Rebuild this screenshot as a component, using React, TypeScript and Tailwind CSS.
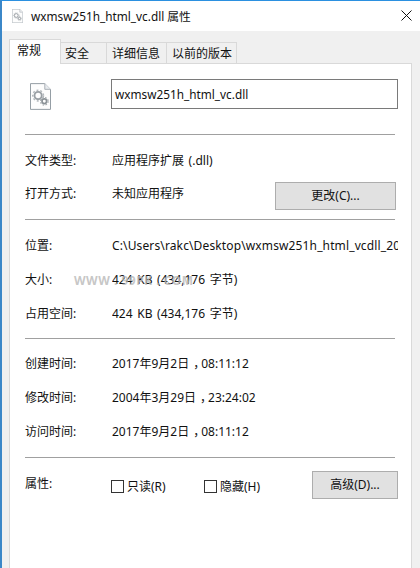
import type { ReactNode } from 'react';

const font = { fontFamily: '"Noto Sans", "Noto Sans CJK SC", sans-serif' };

function GearFile({ width, height }: { width: number; height: number }) {
  return (
    <svg width={width} height={height} viewBox="0 0 22 28" fill="none">
      <path d="M.5.5H15.5L21.5 6.5V27.5H.5Z" fill="#fdfdfd" stroke="#8f98a0" />
      <path d="M15.5.5V6.5H21.5" fill="#e8ebee" stroke="#a8aeb4" />
      <circle cx="8.5" cy="13" r="3.8" stroke="#9aa0a5" strokeWidth="2" />
      <circle cx="8.5" cy="13" r="5.6" stroke="#b4b9bd" strokeWidth="1.6" strokeDasharray="2 2" />
      <circle cx="15" cy="19" r="2.4" stroke="#8b9297" strokeWidth="1.8" />
      <circle cx="15" cy="19" r="4" stroke="#a4aaae" strokeWidth="1.3" strokeDasharray="1.6 1.6" />
    </svg>
  );
}

function Row({ label, value, path, watermark }: { label: string; value: ReactNode; path?: boolean; watermark?: boolean }) {
  return (
    <div className="relative flex h-[34px] items-center whitespace-nowrap pt-[2px]">
      <div className="w-[87px] shrink-0">{label}</div>
      <div className={`w-[286px] overflow-hidden [word-spacing:1.5px] ${path ? 'tracking-[0.13px]' : ''}`}>{value}</div>
      {watermark && (
        <div className="absolute left-[49px] top-[10px] text-[12px] font-bold leading-[18px] tracking-[0.5px] text-[#b8b8b8]/80">
          WWW . 99PK . COM
        </div>
      )}
    </div>
  );
}

function Comma() {
  return <span className="inline-block w-[12px] overflow-hidden pl-[4px] align-bottom">，</span>;
}

function Divider() {
  return <div className="h-px w-[370px] bg-[#a0a0a0]" />;
}

function Tab({ label, width, active }: { label: string; width: string; active?: boolean }) {
  if (active) {
    return (
      <div className={`${width} relative z-10 -mr-px h-[25px] border border-b-0 border-[#d9d9d9] bg-white pl-[7px] pt-[2px]`}>
        {label}
      </div>
    );
  }
  return (
    <div className={`${width} h-[22px] border-r border-t border-[#d9d9d9] bg-[#f0f0f0] pl-[5px] pt-[2px]`}>
      {label}
    </div>
  );
}

export default function App() {
  return (
    <div
      style={font}
      className="flex h-[568px] w-[420px] flex-col overflow-hidden border-l-2 border-t border-l-[#3b87c8] border-t-[#2b90e0] bg-[#f0f0f0] text-[12px] leading-[18px] text-[#111]"
    >
      <div className="flex h-[30px] shrink-0 items-center bg-white pl-[10px]">
        <GearFile width={11} height={14} />
        <span className="ml-[8px] text-[11.8px]">wxmsw251h_html_vc.dll 属性</span>
        <svg className="mb-[2px] ml-auto mr-[8px]" width="11" height="11" viewBox="0 0 11 11" stroke="#111" strokeWidth="1">
          <path d="M.5.5L10.5 10.5M10.5.5L.5 10.5" />
        </svg>
      </div>
      <div className="flex h-[33px] shrink-0 items-end pl-[7px]">
        <Tab label="常规" width="w-[52px]" active />
        <Tab label="安全" width="w-[47px]" />
        <Tab label="详细信息" width="w-[60px]" />
        <Tab label="以前的版本" width="w-[70px]" />
      </div>
      <div className="-mt-px ml-[7px] w-[403px] flex-1 border-x border-t border-[#d9d9d9] bg-white pl-[15px]">
        <div className="flex h-[70px] items-center">
          <div className="mb-[5px] w-[86px] shrink-0 pl-[5px]">
            <GearFile width={21} height={27} />
          </div>
          <div className="mt-[-10px] flex h-[30px] w-[287px] items-center border border-[#7a7a7a] pl-[3px] text-[11.8px]">
            wxmsw251h_html_vc.dll
          </div>
        </div>
        <Divider />
        <div className="h-[8px]" />
        <Row label="文件类型:" value="应用程序扩展 (.dll)" />
        <div className="flex h-[34px] items-center whitespace-nowrap">
          <div className="w-[87px] shrink-0">打开方式:</div>
          <div className="w-[163px] shrink-0">未知应用程序</div>
          <button className="mt-[4px] h-[28px] w-[121px] shrink-0 border border-[#adadad] bg-[#e1e1e1]">更改(C)...</button>
        </div>
        <div className="h-[8px]" />
        <Divider />
        <div className="h-[8px]" />
        <Row label="位置:" value="C:\Users\rakc\Desktop\wxmsw251h_html_vcdll_20171" path />
        <Row label="大小:" value="424 KB (434,176 字节)" watermark />
        <Row label="占用空间:" value="424 KB (434,176 字节)" />
        <div className="h-[8px]" />
        <Divider />
        <div className="h-[7px]" />
        <Row label="创建时间:" value={<>2017年9月2日<Comma />08:11:12</>} />
        <Row label="修改时间:" value={<>2004年3月29日<Comma />23:24:02</>} />
        <Row label="访问时间:" value={<>2017年9月2日<Comma />08:11:12</>} />
        <div className="h-[9px]" />
        <Divider />
        <div className="flex h-[41px] items-end whitespace-nowrap">
          <div className="mt-[17px] w-[86px] shrink-0 self-start">属性:</div>
          <div className="mt-[19px] flex w-[93px] shrink-0 items-center gap-[3px] self-start">
            <div className="h-[13px] w-[13px] border border-[#333]" />
            <span className="pt-[1px]">只读(R)</span>
          </div>
          <div className="mt-[19px] flex w-[108px] shrink-0 items-center gap-[3px] self-start">
            <div className="h-[13px] w-[13px] border border-[#333]" />
            <span className="pt-[1px]">隐藏(H)</span>
          </div>
          <button className="h-[28px] w-[86px] shrink-0 border border-[#adadad] bg-[#e1e1e1]">高级(D)...</button>
        </div>
      </div>
    </div>
  );
}
